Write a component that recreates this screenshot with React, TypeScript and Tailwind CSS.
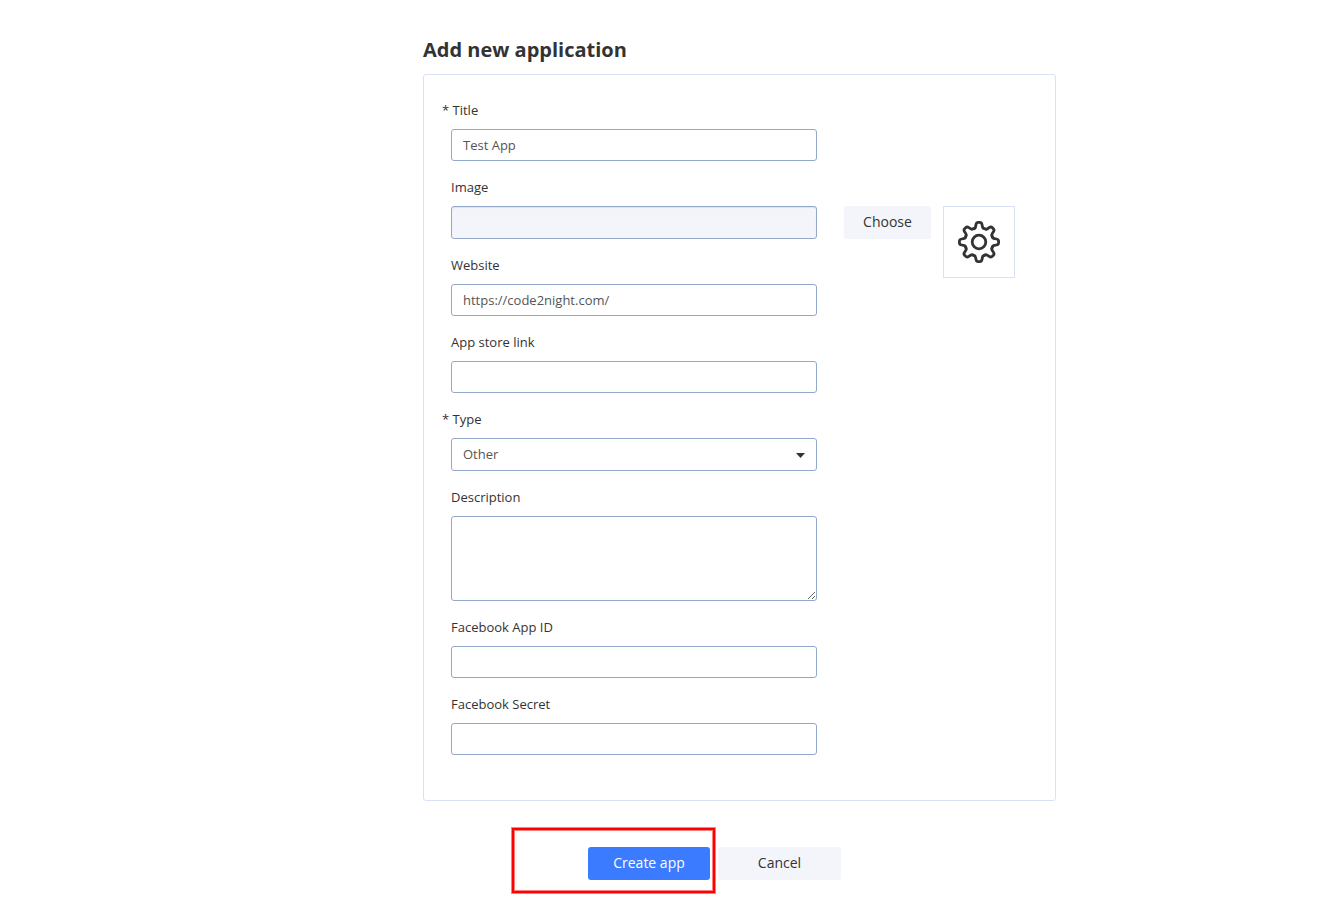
import { useState } from 'react'
import type { ReactNode } from 'react'

const inputClass =
  'block h-8 w-full rounded-[3px] border border-[#93a8cb] bg-white px-[11px] text-[13px] text-[#555] outline-none focus:border-[#3b7bff]'

const teeth = [0, 45, 90, 135, 180, 225, 270, 315]

function GearIcon() {
  return (
    <svg viewBox="-21 -21 42 42" className="size-[42px]" fill="none" stroke="#333" strokeWidth="2.8" strokeLinecap="round" aria-hidden="true">
      {teeth.map((angle) => (
        <path
          key={angle}
          transform={`rotate(${angle})`}
          d="M-5.5 -13.3C-4.3 -13.2 -3.7 -14 -3.4 -15.4L-3 -17.4C-2.7 -18.9 -1.8 -19.6 -0.7 -19.6H0.7C1.8 -19.6 2.7 -18.9 3 -17.4L3.4 -15.4C3.7 -14 4.3 -13.2 5.5 -13.3"
        />
      ))}
      <circle r="6.8" />
    </svg>
  )
}

type FieldProps = {
  id: string
  label: string
  required?: boolean
  aside?: ReactNode
  children: ReactNode
}

function Field({ id, label, required, aside, children }: FieldProps) {
  return (
    <div>
      <label htmlFor={id} className={`mb-[9px] block text-[13px] leading-5 text-[#333] ${required ? '' : 'pl-[9px]'}`}>
        {required ? `* ${label}` : label}
      </label>
      <div className="flex items-start pl-[9px]">
        <div className="w-[366px] shrink-0">{children}</div>
        {aside}
      </div>
    </div>
  )
}

export default function App() {
  const [title, setTitle] = useState('Test App')
  const [website, setWebsite] = useState('https://code2night.com/')
  const [storeLink, setStoreLink] = useState('')
  const [type, setType] = useState('Other')
  const [description, setDescription] = useState('')
  const [facebookId, setFacebookId] = useState('')
  const [facebookSecret, setFacebookSecret] = useState('')

  return (
    <main className="bg-white pt-9 pb-6 pl-[140px] font-['Open_Sans',sans-serif]">
      <form onSubmit={(e) => e.preventDefault()} className="mx-auto max-w-[633px]">
        <h1 className="mb-2.5 text-xl font-bold text-[#333]">Add new application</h1>

        <div className="flex flex-col gap-4 rounded-[3px] border border-[#d7e2f5] pt-[25px] pr-10 pb-[45px] pl-[18px]">
          <Field id="title" label="Title" required>
            <input id="title" value={title} onChange={(e) => setTitle(e.target.value)} className={inputClass} />
          </Field>

          <Field
            id="image"
            label="Image"
            aside={
              <div className="ml-[27px] flex h-[33px] items-start gap-3">
                <button type="button" className="h-[33px] w-[87px] rounded-[3px] bg-[#f4f5fa] pb-0.5 text-sm text-[#333]">
                  Choose
                </button>
                <div className="flex size-[72px] items-center justify-center border border-[#d7e2f5]">
                  <GearIcon />
                </div>
              </div>
            }
          >
            <input
              id="image"
              readOnly
              className="block h-[33px] w-full rounded-[3px] border border-[#93a8cb] bg-[#f4f5fa] px-[11px] text-[13px] text-[#555] shadow-[inset_0_1px_1px_rgba(0,0,0,0.08)] outline-none"
            />
          </Field>

          <Field id="website" label="Website">
            <input id="website" value={website} onChange={(e) => setWebsite(e.target.value)} className={inputClass} />
          </Field>

          <Field id="store-link" label="App store link">
            <input id="store-link" value={storeLink} onChange={(e) => setStoreLink(e.target.value)} className={inputClass} />
          </Field>

          <Field id="type" label="Type" required>
            <div className="relative">
              <select
                id="type"
                value={type}
                onChange={(e) => setType(e.target.value)}
                className="block h-[33px] w-full appearance-none rounded-[3px] border border-[#93a8cb] bg-white px-[11px] text-[13px] text-[#555] outline-none"
              >
                <option>Other</option>
              </select>
              <svg viewBox="0 0 9 5" className="pointer-events-none absolute top-[15px] right-3 h-[5px] w-[9px]" fill="#333" aria-hidden="true">
                <path d="M0 0h9L4.5 5z" />
              </svg>
            </div>
          </Field>

          <Field id="description" label="Description">
            <textarea
              id="description"
              value={description}
              onChange={(e) => setDescription(e.target.value)}
              className="block h-[85px] w-full resize rounded-[3px] border border-[#93a8cb] bg-white px-[11px] py-1.5 text-[13px] text-[#555] outline-none"
            />
          </Field>

          <Field id="facebook-id" label="Facebook App ID">
            <input id="facebook-id" value={facebookId} onChange={(e) => setFacebookId(e.target.value)} className={inputClass} />
          </Field>

          <Field id="facebook-secret" label="Facebook Secret">
            <input id="facebook-secret" value={facebookSecret} onChange={(e) => setFacebookSecret(e.target.value)} className={inputClass} />
          </Field>
        </div>

        <div className="mt-[46px] flex gap-2 pl-[165px]">
          <div className="relative">
            <button type="submit" className="block h-[33px] w-[122px] rounded-[3px] bg-[#3b7bff] pb-0.5 text-sm text-white">
              Create app
            </button>
            {/* highlight around the submit button */}
            <div className="pointer-events-none absolute -top-[19px] -left-[76px] h-[65px] w-[203px] border-2 border-[#ff0000] shadow-[0_0_0_1px_rgba(255,0,0,0.5),inset_0_0_0_1px_rgba(255,0,0,0.5)]" />
          </div>
          <button type="button" className="h-[33px] w-[123px] rounded-[3px] bg-[#f4f5fa] pb-0.5 text-sm text-[#333]">
            Cancel
          </button>
        </div>
      </form>
    </main>
  )
}
